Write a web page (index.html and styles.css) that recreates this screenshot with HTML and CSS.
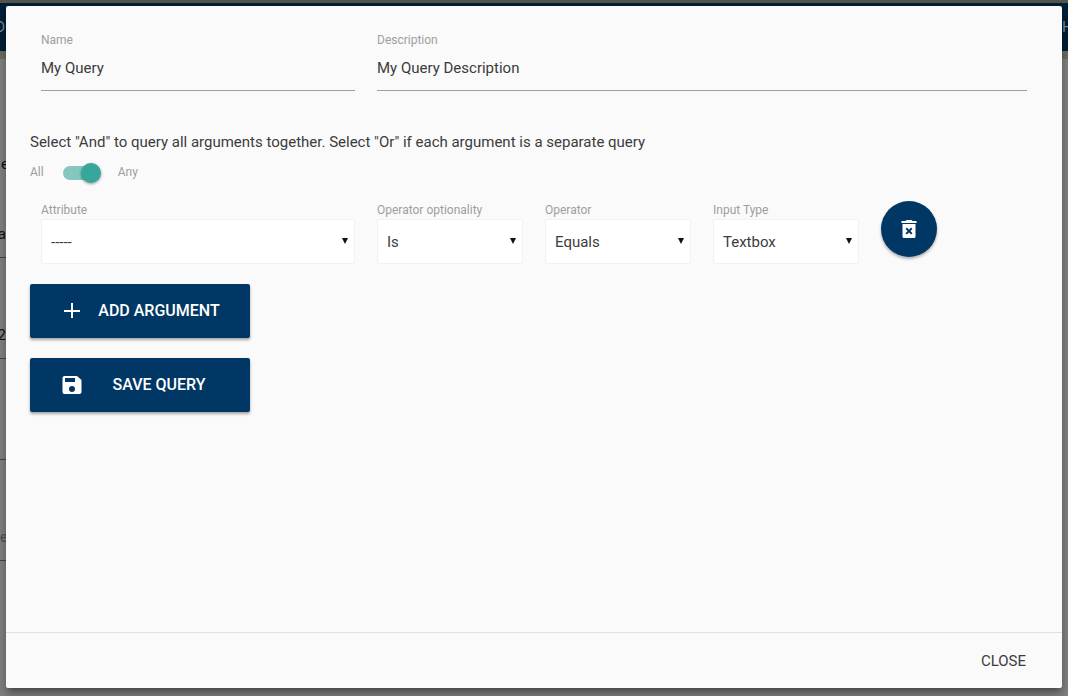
FILE: index.html
```html
<!DOCTYPE html>
<html lang="en">
<head>
<meta charset="utf-8">
<title>My Query</title>
<meta name="viewport" content="width=device-width, initial-scale=1">
<link rel="stylesheet" href="styles.css">
</head>
<body>
<div class="page" aria-hidden="true">
  <div class="map-strip"></div>
  <div class="navbar"><span>D</span><span class="nav-end">H</span></div>
  <div class="map-edge"></div>
  <div class="page-rows">
    <div class="page-row row-text"><span>e</span></div>
    <div class="page-row row-short"><span>a</span></div>
    <div class="page-row"><span>2</span></div>
    <div class="page-row"></div>
    <div class="page-row muted"><span>es</span></div>
  </div>
</div>
<main class="modal" role="dialog" aria-label="Query">
  <form class="modal-content">
    <div class="row">
      <div class="field name-field">
        <label for="name">Name</label>
        <input class="text-input" id="name" type="text" value="My Query">
      </div>
      <div class="field description-field">
        <label for="description">Description</label>
        <input class="text-input" id="description" type="text" value="My Query Description">
      </div>
    </div>
    <p class="hint">Select "And" to query all arguments together. Select "Or" if each argument is a separate query</p>
    <label class="switch">
      <span>All</span>
      <input class="lever" type="checkbox" checked>
      <span>Any</span>
    </label>
    <div class="row argument">
      <div class="field attribute-field">
        <label for="attribute">Attribute</label>
        <div class="select-box"><select id="attribute"><option>-----</option></select><svg class="arrow" viewBox="0 0 6 6"><path d="M0 0h6L3 6z"/></svg></div>
      </div>
      <div class="field">
        <label for="optionality">Operator optionality</label>
        <div class="select-box"><select id="optionality"><option>Is</option></select><svg class="arrow" viewBox="0 0 6 6"><path d="M0 0h6L3 6z"/></svg></div>
      </div>
      <div class="field">
        <label for="operator">Operator</label>
        <div class="select-box"><select id="operator"><option>Equals</option></select><svg class="arrow" viewBox="0 0 6 6"><path d="M0 0h6L3 6z"/></svg></div>
      </div>
      <div class="field">
        <label for="input-type">Input Type</label>
        <div class="select-box"><select id="input-type"><option>Textbox</option></select><svg class="arrow" viewBox="0 0 6 6"><path d="M0 0h6L3 6z"/></svg></div>
      </div>
      <div class="field">
        <button class="round-button" type="button" aria-label="Delete argument">
          <svg class="icon" viewBox="0 0 24 24"><path fill-rule="evenodd" d="M5.500 7v12.500c0 .9.600 1.500 1.500 1.500h10c.9 0 1.500-.6 1.500-1.500V7zM8.500 12l1.400-1.400 2.100 2.100 2.100-2.100 1.400 1.400-2.100 2.100 2.100 2.100-1.400 1.400-2.100-2.100-2.100 2.100-1.400-1.400 2.100-2.100zM15.500 4l-1-1h-5l-1 1H4.500v2h15V4z"/></svg>
        </button>
      </div>
    </div>
    <div class="actions">
      <button class="button" type="button">
        <svg class="icon" viewBox="0 0 24 24"><path d="M20 13h-7v6h-2v-6H4v-2h7V4h2v7h7z"/></svg>
        <span>ADD ARGUMENT</span>
      </button>
      <button class="button" type="button">
        <svg class="icon" viewBox="0 0 24 24"><path d="M17 3H4.500A2 2 0 0 0 2.500 5v14a2 2 0 0 0 2 2h15c1.100 0 2-.9 2-2V7zm-5 16a3 3 0 1 1 0-6 3 3 0 0 1 0 6zm3-10H5V5h10z"/></svg>
        <span>SAVE QUERY</span>
      </button>
    </div>
  </form>
  <footer class="modal-footer"><button class="close" type="button">CLOSE</button></footer>
</main>
</body>
</html>
```
FILE: styles.css
```css
* { box-sizing: border-box; }
body {
  margin: 0;
  height: 100vh;
  overflow: hidden;
  background: #828282;
  color: #3c3c3c;
  font: 15px/22px Roboto, sans-serif;
}
.page { position: absolute; inset: 0; overflow: hidden; color: #111; }
.map-strip { height: 3px; background: #54564c; }
.navbar {
  display: flex;
  justify-content: space-between;
  align-items: center;
  height: 48px;
  background: #001f38;
  color: #7f8c96;
}
.navbar span { display: flex; justify-content: flex-end; width: 6px; padding-right: 1px; }
.navbar .nav-end { justify-content: flex-start; }
.map-edge { height: 8px; background: #6d6e62; }
.page-rows { width: 50%; }
.page-row {
  display: flex;
  align-items: flex-end;
  height: 101px;
  padding-bottom: 12px;
  border-bottom: 1px solid #454545;
}
.page-row span { display: flex; justify-content: flex-end; width: 6px; }
.page-row.row-text { height: 116px; padding: 0; border: 0; }
.page-row.row-text span { justify-content: flex-start; padding-left: 1px; }
.page-row.row-short { height: 83px; }
.page-row.muted { color: #505050; }
.page-row.muted span { justify-content: flex-start; }
.modal {
  position: absolute;
  inset: 6px 6px 8px;
  display: flex;
  flex-direction: column;
  border-radius: 2px;
  background: #fafafa;
  box-shadow: 0 8px 10px 1px rgba(0,0,0,.14), 0 3px 14px 2px rgba(0,0,0,.12), 0 5px 5px -3px rgba(0,0,0,.3);
}
.modal-content { flex: 1; min-height: 0; padding: 24px; overflow: auto; }
.row { display: grid; grid-template-columns: repeat(12, 1fr); }
.field { grid-column: span 2; min-width: 0; padding: 0 11px; }
.field label { display: block; color: #9e9e9e; font-size: 12px; line-height: 18px; }
.name-field, .attribute-field { grid-column: span 4; }
.description-field { grid-column: span 8; }
.text-input {
  display: block;
  width: 100%;
  height: 44px;
  padding: 0 0 2px;
  border: 0;
  border-bottom: 1px solid #9e9e9e;
  outline: 0;
  background: transparent;
  color: inherit;
  font: inherit;
}
.name-field, .description-field { padding-top: 1px; padding-bottom: 40px; }
.name-field label, .description-field label { height: 16px; }
.hint { margin: 0; }
.switch { display: flex; align-items: center; gap: 19px; height: 38px; color: #9e9e9e; font-size: 12px; }
.lever {
  appearance: none;
  display: flex;
  align-items: center;
  width: 36px;
  height: 14px;
  margin: 1px 0 0;
  border-radius: 15px;
  background: #84c7c1;
}
.lever::before {
  content: "";
  flex: none;
  width: 20px;
  height: 20px;
  border-radius: 50%;
  background: #37a69b;
  box-shadow: 0 1px 3px rgba(0,0,0,.4);
}
.lever:checked::before { margin-left: 18px; }
.argument { margin-top: 10px; }
.select-box { display: grid; align-items: center; }
.select-box > * { grid-area: 1 / 1; }
.select-box select {
  appearance: none;
  width: 100%;
  height: 45px;
  padding: 0 9px;
  border: 1px solid #f2f2f2;
  border-radius: 2px;
  background: #fff;
  color: inherit;
  font: inherit;
}
.arrow { justify-self: end; width: 6px; height: 6px; margin-right: 7px; margin-bottom: 2px; fill: #111; pointer-events: none; }
.icon { width: 24px; height: 24px; fill: currentColor; }
.round-button {
  display: grid;
  place-items: center;
  width: 56px;
  height: 56px;
  padding: 0;
  border: 0;
  border-radius: 50%;
  background: #003764;
  color: #fff;
  box-shadow: 0 2px 3px rgba(0,0,0,.3);
}
.actions { display: flex; flex-direction: column; align-items: flex-start; gap: 20px; margin-top: 20px; }
.button {
  display: flex;
  align-items: center;
  width: 220px;
  height: 54px;
  padding: 0 30px;
  border: 0;
  border-radius: 2px;
  background: #003764;
  color: #fff;
  font: 500 16px/22px Roboto, sans-serif;
  box-shadow: 0 2px 3px rgba(0,0,0,.35);
}
.button span { flex: 1; margin-left: 14px; text-align: center; white-space: nowrap; }
.modal-footer { display: flex; justify-content: flex-end; align-items: center; height: 56px; padding: 0 36px; border-top: 1px solid #e0e0e0; }
.close { padding: 0; border: 0; background: transparent; color: inherit; font: inherit; }
```
